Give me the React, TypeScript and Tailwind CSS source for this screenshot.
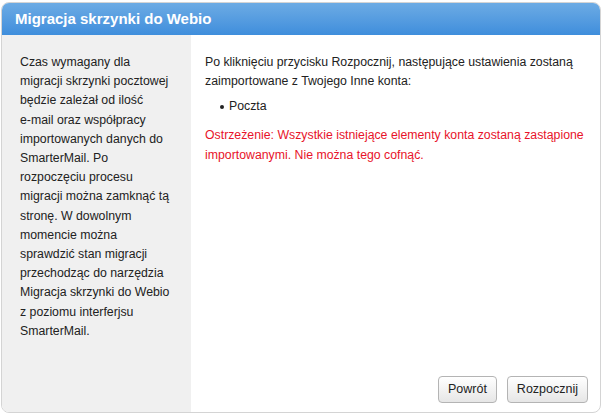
export default function App() {
  const font = { fontFamily: '"Liberation Sans", Arial, sans-serif' };
  return (
    <div className="w-[602px] h-[414px] bg-white pl-[1px] pt-[2px]" style={font}>
      <div className="w-[600px] h-[411px] rounded-[8px] border border-[#d4d4d4] overflow-hidden flex flex-col">
        <div className="h-[32px] shrink-0 bg-gradient-to-b from-[#6cabe4] to-[#3f8edc] flex items-center px-[13px]">
          <span className="text-white font-bold text-[15px]">Migracja skrzynki do Webio</span>
        </div>
        <div className="flex flex-1 min-h-0">
          <div className="w-[189px] shrink-0 bg-[#f0f0f0] pl-[18px] pt-[18px] text-[12.3px] leading-[19.2px] text-[#222] whitespace-nowrap">
            Czas wymagany dla<br />
            migracji skrzynki pocztowej<br />
            będzie zależał od ilość<br />
            e-mail oraz współpracy<br />
            importowanych danych do<br />
            SmarterMail. Po<br />
            rozpoczęciu procesu<br />
            migracji można zamknąć tą<br />
            stronę. W dowolnym<br />
            momencie można<br />
            sprawdzić stan migracji<br />
            przechodząc do narzędzia<br />
            Migracja skrzynki do Webio<br />
            z poziomu interferjsu<br />
            SmarterMail.
          </div>
          <div className="flex-1 flex flex-col pl-[14px] pr-[12px] pt-[18px] pb-[9px] text-[12.3px] leading-[19.2px] text-[#222] whitespace-nowrap">
            <p>
              Po kliknięciu przycisku Rozpocznij, następujące ustawienia zostaną<br />
              zaimportowane z Twojego Inne konta:
            </p>
            <ul className="mt-[6px] pl-[15px] flex flex-col">
              <li className="flex items-center gap-[5px]">
                <span className="w-[4px] h-[4px] rounded-full bg-[#222] inline-block" />
                <span>Poczta</span>
              </li>
            </ul>
            <p className="mt-[8px] text-[#e8132a] leading-[20.5px]">
              Ostrzeżenie: Wszystkie istniejące elementy konta zostaną zastąpione<br />
              importowanymi. Nie można tego cofnąć.
            </p>
            <div className="mt-auto flex justify-end gap-[10px]">
              <button className="h-[27px] px-[9px] rounded-[4px] border border-[#b4b4b4] bg-gradient-to-b from-[#ffffff] to-[#e6e6e6] text-[12.5px] text-[#222]">
                Powrót
              </button>
              <button className="h-[27px] px-[9px] rounded-[4px] border border-[#b4b4b4] bg-gradient-to-b from-[#ffffff] to-[#e6e6e6] text-[12.5px] text-[#222]">
                Rozpocznij
              </button>
            </div>
          </div>
        </div>
      </div>
    </div>
  );
}
